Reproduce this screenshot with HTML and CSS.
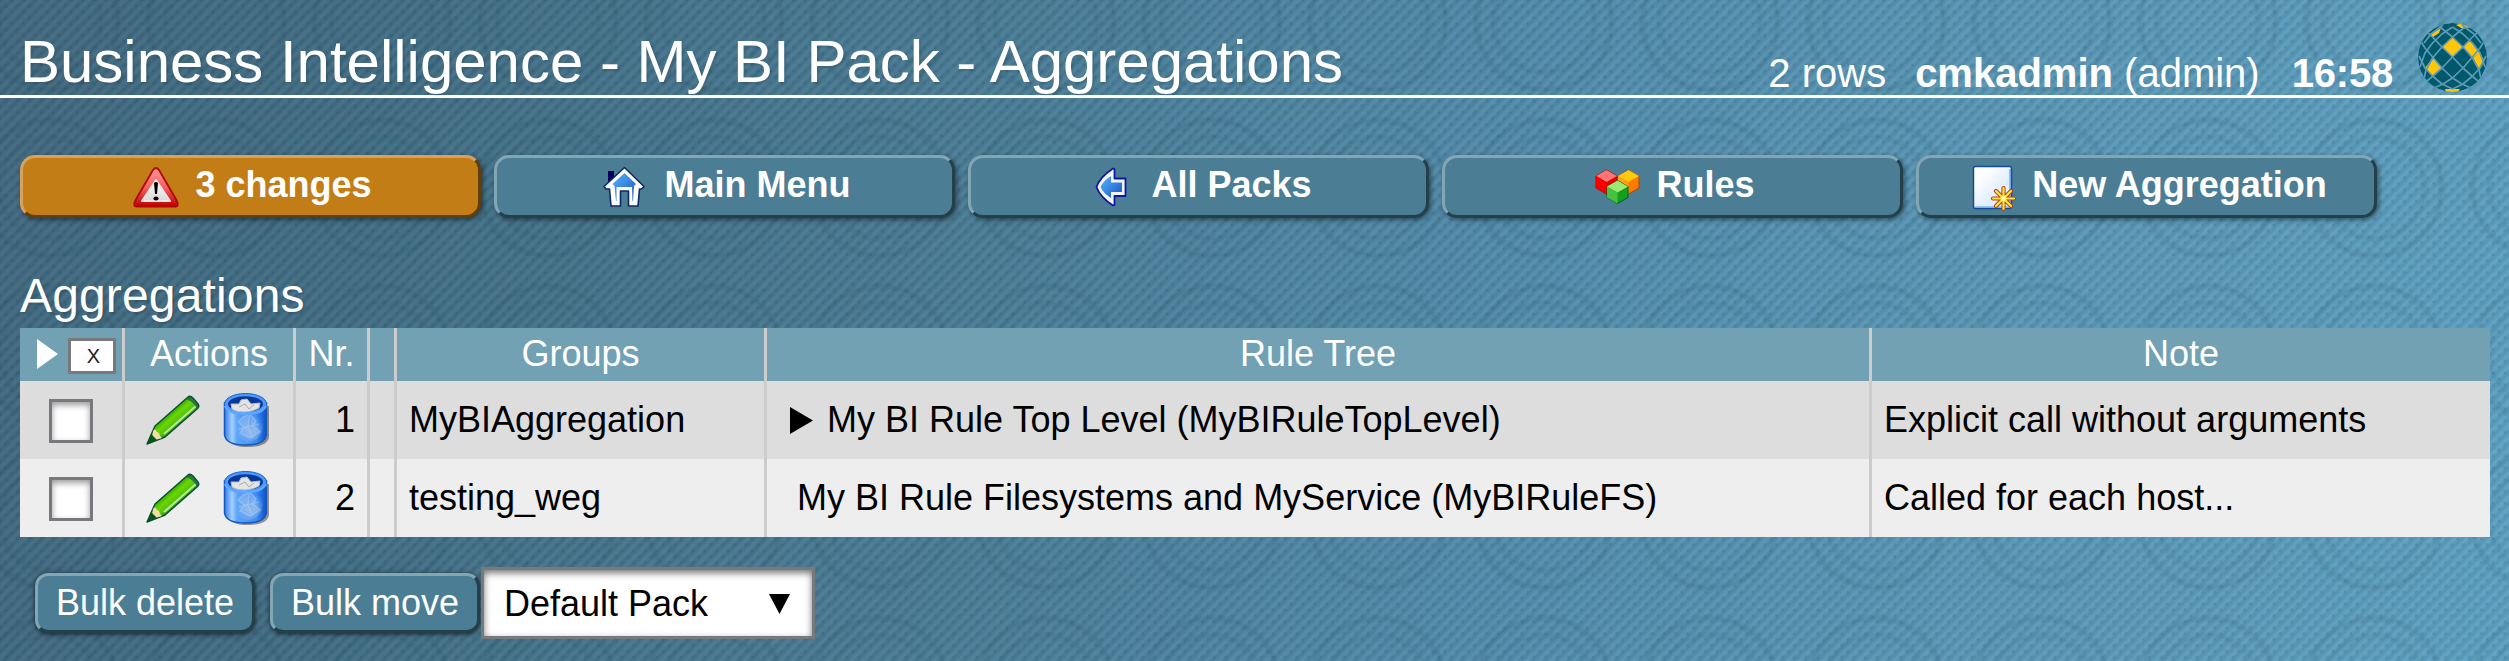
FILE: index.html
```html
<!DOCTYPE html>
<html lang="en">
<head>
<meta charset="utf-8">
<title>Business Intelligence - My BI Pack - Aggregations</title>
<link rel="stylesheet" href="styles.css">
</head>
<body>
<svg class="defs" width="0" height="0" aria-hidden="true">
  <defs>
    <linearGradient id="red" x1="0" y1="0" x2="0" y2="1"><stop offset="0" stop-color="#ff9a9a"/><stop offset=".5" stop-color="#f56060"/><stop offset="1" stop-color="#c00000"/></linearGradient>
    <linearGradient id="silver" x1="0" y1="0" x2="0" y2="1"><stop offset="0" stop-color="#fff"/><stop offset="1" stop-color="#d8d8d8"/></linearGradient>
    <linearGradient id="blue" x1="0" y1="0" x2="1" y2="1"><stop offset="0" stop-color="#59b4ff"/><stop offset="1" stop-color="#1556c0"/></linearGradient>
    <linearGradient id="page" x1="0" y1="0" x2="1" y2="1"><stop offset=".2" stop-color="#fff"/><stop offset=".65" stop-color="#e0edff"/><stop offset="1" stop-color="#fff"/></linearGradient>
    <linearGradient id="green" gradientUnits="userSpaceOnUse" x1="20" y1="16" x2="35" y2="33"><stop offset="0" stop-color="#0a8a0a"/><stop offset=".4" stop-color="#6bd600"/><stop offset=".65" stop-color="#52c40c"/><stop offset="1" stop-color="#0b7d10"/></linearGradient>
    <linearGradient id="can" x1="0" y1="0" x2="1" y2="0"><stop offset="0" stop-color="#2f7df0"/><stop offset=".18" stop-color="#a4d0ff"/><stop offset=".3" stop-color="#5ba4fa"/><stop offset=".75" stop-color="#3f8df2"/><stop offset="1" stop-color="#0a50c8"/></linearGradient>
    <radialGradient id="canglow" cx=".6" cy=".65" r=".5"><stop offset="0" stop-color="#8fb9ee"/><stop offset="1" stop-color="#8fb9ee" stop-opacity="0"/></radialGradient>
    <clipPath id="ball"><circle cx="34.5" cy="34.5" r="34.5"/></clipPath>
    <g id="arcs"><path d="M22 4 L34.500 14 L45 24 L54.500 35 L61 47 L63 56"/><path d="M8 8 L14.500 14 L24 24 L34.500 34 L45 45 L54 53 L60 58"/><path d="M2 17 L7 25 L15 34.500 L24 45 L34.500 55 L44 61 L53 65"/><path d="M1 33 L7 45 L14.500 53 L24 61 L34.500 66"/><path d="M34.500 4 L45 11 L54.500 20 L62 30 L67 44"/><path d="M44 2 L56 11 L63 20"/></g>
    <symbol id="pencil" viewBox="0 0 54 50">
      <path d="M1 49 L9 31 L42 2 Q44 0 47 3 L52 9 Q54 12 51 14 L19 42 Z" fill="url(#green)" stroke="#0a4a38" stroke-width="1.400" stroke-linejoin="round"/>
      <path d="M18 39 L50 11" stroke="#dcf7bd" stroke-width="2.200" opacity=".75"/>
      <path d="M7 36 L9 34 L11 37 L13 38 L14 41 L16 43 L6 46 Z" fill="#f4dcaa"/>
      <path d="M1 49 L5 39 L11 45 Z" fill="#06561c"/>
      <path d="M40 4 Q44 0 47 3 L52 9 Q54 12 51 14 Q48 7 40 4Z" fill="#0f5a48" opacity=".7"/>
    </symbol>
    <symbol id="trash" viewBox="0 0 48 56">
      <path d="M4 46 Q8 56 27 55 Q45 54 46 45 V14 H42Z" fill="#000" opacity=".38"/>
      <path d="M1.500 11 V43 Q3 53 22.500 53 Q42 53 43.500 43 V11Z" fill="url(#can)" stroke="#1258bd" stroke-width="1.500"/>
      <ellipse cx="25" cy="34" rx="15" ry="16" fill="url(#canglow)"/>
      <path d="M20 25 L27 22 L33 29 L30 34 L37 40 L27 46 L17 41 L21 35 L15 30 Z M27 22 L25 35 L30 46 M16 37 L36 32" fill="#9fc4ed" fill-opacity=".4" stroke="#c5ddf5" stroke-opacity=".35" stroke-width="1.500"/>
      <ellipse cx="22.500" cy="12" rx="21" ry="10.500" fill="#4c98fb" stroke="#1b60cc"/>
      <ellipse cx="22.500" cy="12" rx="17.500" ry="7.800" fill="#07389b"/>
      <path d="M8 12 L16 12 L18 8 L24 7 L28 12 L37 11 L36 16 Q29 20 22 20 Q13 20 9 17Z" fill="#e4e4e4" stroke="#bdbdbd"/>
      <path d="M16 15 L22 12 L26 17 L31 13" stroke="#aaa" fill="none"/>
      <path d="M2 14 Q6 22 22.500 22 Q39 22 43 14" fill="none" stroke="#5ea6ff" stroke-width="2.500"/>
    </symbol>
  </defs>
</svg>

<header class="header">
  <h1 class="title">Business Intelligence - My BI Pack - Aggregations</h1>
  <div class="status">
    <span class="rows">2 rows</span>
    <span class="user"><b>cmkadmin</b> (admin)</span>
    <b class="clock">16:58</b>
    <svg class="logo" viewBox="0 0 69 69">
      <g clip-path="url(#ball)">
        <circle cx="34.5" cy="34.5" r="34.5" fill="#00586a"/>
        <path fill="#ffc60a" d="M34.500 14 L45 24 L34.500 34 L24 24Z M54.500 20 L62 30 L54.500 35 L45 24 L50 18Z M62 30 L66 37 L61 46 L55 35Z M15 34.500 L24 45 L14.500 53 L7 45Z M13 11 L23 5 L21 10 L15 14 L10 12Z M38 2 L44 0 L52 4 L45 6Z M27 66 H42 L40 69 H28Z"/>
        <g fill="none" stroke="#5c9bb8" stroke-width="1.7" stroke-linejoin="round">
          <use href="#arcs"/>
          <use href="#arcs" transform="matrix(-1 0 0 1 69 0)"/>
        </g>
      </g>
    </svg>
  </div>
</header>

<nav class="buttons">
  <a class="ctx ctx-changes">
    <svg class="icon" viewBox="1 0 48 48">
      <path d="M25 5 Q26.500 5 28 7 L46 38 Q48 43.500 45 43.500 H5 Q2 43.500 4 38 L22 7 Q23.500 5 25 5Z" fill="url(#red)" stroke="#b00808" stroke-width="1.800"/>
      <path d="M25 17 L39 38 H11Z" fill="url(#silver)" stroke="#f4e4e4" stroke-width="2" stroke-linejoin="round"/>
      <path d="M23 20 Q25 18 27 20 L26 31 H24Z" fill="#000"/><ellipse cx="25" cy="35.500" rx="2.600" ry="1.900" fill="#000"/>
    </svg>
    <span class="label">3 changes</span>
  </a>
  <a class="ctx">
    <svg class="icon" viewBox="0 0 48 48">
      <path d="M6 8 H12 V17 L6 22Z" fill="#000060"/>
      <path d="M22.500 4.500 L42 23.500 L39.500 26 H37.500 L36 43 H26.500 V28 H18.500 V43 H9 L7.500 26 H4 L2 23.500Z" fill="#fff" stroke="#0b2a63" stroke-width="1.600" stroke-linejoin="round"/>
      <path d="M22.500 10 L34 21 L32 23 L31 38 H30.500 L30 24 H14.500 V38 H14 L12.500 23 L10.500 21Z" fill="url(#blue)"/>
    </svg>
    <span class="label">Main Menu</span>
  </a>
  <a class="ctx">
    <svg class="icon" viewBox="-3 0 48 48">
      <path d="M22 5.500 L23.500 6 V15.500 H34.500 V33 H23.500 V42 L22 42.500 Q9 34 5.500 24 Q9 14 22 5.500Z" fill="#f4f4ff" stroke="#0a1a9a" stroke-width="1.800" stroke-linejoin="round"/>
      <path d="M20 13 V19.500 H31 V29 H20 V35 Q12 30 9.500 24 Q12 18 20 13Z" fill="url(#blue)"/>
    </svg>
    <span class="label">All Packs</span>
  </a>
  <a class="ctx">
    <svg class="icon" viewBox="0 0 48 48">
      <g stroke-width="1" stroke-linejoin="round">
        <path d="M3 13 L13.500 7 L24 13 V25 L13.500 31 L3 25Z" fill="#e60000" stroke="#8c1010"/><path d="M3 13 L13.500 7 L24 13 L13.500 19Z" fill="#ff7474"/><path d="M3 13 L13.500 19 V31 L3 25Z" fill="#f80000"/>
        <path d="M25 13 L35.500 7 L46 13 V25 L35.500 31 L25 25Z" fill="#ff7a00" stroke="#a84800"/><path d="M25 13 L35.500 7 L46 13 L35.500 19Z" fill="#ffcb10"/><path d="M25 13 L35.500 19 V31 L25 25Z" fill="#ffa018"/>
        <path d="M14 23.500 L24.500 17.500 L35 23.500 V34.500 L24.500 40.500 L14 34.500Z" fill="#10a020" stroke="#0b5a14"/><path d="M14 23.500 L24.500 17.500 L35 23.500 L24.500 29.500Z" fill="#a0e870"/><path d="M14 23.500 L24.500 29.500 V40.500 L14 34.500Z" fill="#48c040"/>
      </g>
    </svg>
    <span class="label">Rules</span>
  </a>
  <a class="ctx">
    <svg class="icon" viewBox="-1 0 48 48">
      <rect x="3.500" y="3.500" width="38" height="42" rx="2" fill="url(#page)" stroke="#114d96" stroke-width="1.500"/>
      <path d="M5 44 H40 V6" fill="none" stroke="#4b9cf5" stroke-width="1.200"/>
      <path d="M33.500 25 V46 M23 35.500 H44 M26 28 L41 43 M41 28 L26 43" stroke="#b8401c" stroke-width="4.200" stroke-linecap="round"/>
      <path d="M33.500 25 V46 M23 35.500 H44 M26 28 L41 43 M41 28 L26 43" stroke="#ffe43c" stroke-width="2.200" stroke-linecap="round"/>
      <circle cx="33.500" cy="35.500" r="2.500" fill="#fff8a0"/>
    </svg>
    <span class="label">New Aggregation</span>
  </a>
</nav>

<main class="content">
  <h2 class="heading">Aggregations</h2>
  <table class="data">
    <colgroup><col class="c-sel"><col class="c-act"><col class="c-nr"><col class="c-gap"><col class="c-grp"><col class="c-tree"><col class="c-note"></colgroup>
    <thead>
      <tr>
        <th><div class="selall"><svg class="tri-white" viewBox="0 0 21 30"><path d="M0 0 L21 15 L0 30Z" fill="#fff"/></svg><button class="x">X</button></div></th>
        <th>Actions</th><th>Nr.</th><th></th><th>Groups</th><th>Rule Tree</th><th>Note</th>
      </tr>
    </thead>
    <tbody>
      <tr>
        <td><div class="check"></div></td>
        <td><div class="actions"><svg class="pencil"><use href="#pencil"/></svg><svg class="trash"><use href="#trash"/></svg></div></td>
        <td class="num">1</td><td></td><td>MyBIAggregation</td>
        <td><div class="tree"><svg class="tri" viewBox="0 0 23 27"><path d="M0 0 L23 13.500 L0 27Z"/></svg>My BI Rule Top Level (MyBIRuleTopLevel)</div></td>
        <td>Explicit call without arguments</td>
      </tr>
      <tr>
        <td><div class="check"></div></td>
        <td><div class="actions"><svg class="pencil"><use href="#pencil"/></svg><svg class="trash"><use href="#trash"/></svg></div></td>
        <td class="num">2</td><td></td><td>testing_weg</td>
        <td><div class="tree leaf">My BI Rule Filesystems and MyService (MyBIRuleFS)</div></td>
        <td>Called for each host...</td>
      </tr>
    </tbody>
  </table>
  <div class="bulk">
    <button class="btn btn-delete">Bulk delete</button>
    <button class="btn btn-move">Bulk move</button>
    <div class="select"><span>Default Pack</span><svg class="arrow" viewBox="0 0 21 20"><path d="M0 0 H21 L10.500 20Z"/></svg></div>
  </div>
</main>
</body>
</html>
```
FILE: styles.css
```css
* { box-sizing: border-box; }

html { height: 661px; overflow: hidden; }

body {
  margin: 0;
  height: 661px;
  overflow: hidden;
  font-family: "Liberation Sans", Arial, sans-serif;
  font-size: 36px;
  color: #000;
  background-color: #4e829b;
  background-image:
    radial-gradient(circle at 50% 50%, transparent 46px, rgba(20, 60, 75, .09) 51px, transparent 55px, transparent 63px, rgba(20, 60, 75, .12) 68px, transparent 72px),
    radial-gradient(circle, rgba(20, 60, 90, .2) 0, transparent 2.5px),
    radial-gradient(circle, rgba(20, 60, 90, .2) 0, transparent 2.5px),
    repeating-linear-gradient(135deg, rgba(20, 60, 85, .13) 0, rgba(255, 255, 255, .04) 4.192px, rgba(20, 60, 85, .13) 8.384px),
    linear-gradient(97deg, #42697f 0%, #436e84 15%, #4c7e97 40%, #558fae 62%, #5c9ab8 80%, #60a3c4 100%);
  background-size: 166px 166px, 11.857px 11.857px, 11.857px 11.857px, 166px 166px, 100% 100%;
  background-position: -33px -61px, 0 0, 5.929px 5.929px, 0 0, 0 0;
}

.defs { position: absolute; }

.header {
  display: flex;
  justify-content: space-between;
  height: 98px;
  padding-left: 20px;
  border-bottom: 3px solid #fff;
  color: #fff;
  white-space: nowrap;
}
.title {
  margin: 0;
  padding-top: 27px;
  font-size: 60px;
  font-weight: normal;
  line-height: 69px;
  letter-spacing: -.02px;
  text-shadow: 2px 2px 2px rgba(0, 0, 0, .12);
}
.status {
  display: flex;
  align-items: flex-start;
  padding-right: 22px;
  font-size: 40px;
  line-height: 45px;
}
.rows, .user, .clock { padding-top: 51px; }
.rows { margin-right: 29px; }
.user { margin-right: 32px; }
.clock { letter-spacing: -.2px; }
.logo { width: 69px; height: 69px; margin: 23px 0 0 25px; }

.buttons {
  display: flex;
  gap: 13px;
  margin: 57px 0 0 20px;
}
.ctx {
  display: flex;
  align-items: center;
  justify-content: center;
  gap: 15px;
  width: 461px;
  height: 63px;
  padding-left: 3px;
  border: 3px solid;
  border-color: #83a6b4 #233f4a #233f4a #83a6b4;
  border-radius: 15px;
  background: #4b7e95;
  box-shadow: 2px 2px 5px rgba(0, 0, 0, .45);
  color: #fff;
  font-weight: bold;
  line-height: 42px;
}
.label { padding-bottom: 3px; }
.ctx-changes {
  border-color: #d6a260 #613e0b #613e0b #d6a260;
  background: #c37d17;
}
.icon { width: 48px; height: 48px; }

.content { padding: 47px 0 0 20px; }
.heading {
  margin: 0;
  height: 63px;
  font-size: 48px;
  font-weight: normal;
  line-height: 61px;
  letter-spacing: .15px;
  color: #fff;
  text-shadow: 2px 2px 2px rgba(0, 0, 0, .15);
}

.data {
  width: 2470px;
  table-layout: fixed;
  border-collapse: separate;
  border-spacing: 0;
  line-height: 42px;
  white-space: nowrap;
}
.c-sel { width: 102px; }
.c-act { width: 171px; }
.c-nr { width: 74px; }
.c-gap { width: 27px; }
.c-grp { width: 370px; }
.c-tree { width: 1105px; }
.c-note { width: 621px; }
.data th {
  height: 53px;
  padding: 0 0 1px;
  background: #72a1b3;
  color: #fff;
  font-weight: normal;
}
.data td { height: 78px; padding: 0 12px; background: #eee; }
.data tbody tr:first-child td { background: #ddd; }
.data th + th, .data td + td { border-left: 3px solid #ccc; }
.data td.num { text-align: right; }
.data td:nth-child(-n+2), .data td:nth-child(4) { padding: 0; }

.selall { display: flex; align-items: center; gap: 10px; padding-left: 17px; }
.tri-white { width: 21px; height: 30px; }
.x {
  width: 48px;
  height: 36px;
  margin-top: 4px;
  padding: 0 0 0 3px;
  border: 3px solid #77797d;
  background: #fff;
  color: #222;
  font: 20px/28px "Liberation Sans", Arial, sans-serif;
}
.check {
  width: 44px;
  height: 44px;
  margin: 2px 0 0 29px;
  border: 3px solid #77797d;
  background: #fff;
  box-shadow: inset 0 3px 6px rgba(0, 0, 0, .4);
}
.actions { display: flex; align-items: center; padding-left: 21px; }
.pencil { width: 54px; height: 50px; }
.trash { width: 48px; height: 56px; margin-left: 23px; }
.tree { display: flex; align-items: center; padding-left: 11px; }
.tree.leaf { padding-left: 18px; }
.tri { width: 23px; height: 27px; margin-right: 14px; }

.bulk { display: flex; align-items: center; padding: 30px 0 0 15px; }
.btn {
  height: 60px;
  padding: 0 0 1px;
  border: 3px solid;
  border-color: #83a6b4 #233f4a #233f4a #83a6b4;
  border-radius: 13px;
  background: #4b7e95;
  box-shadow: 0 1px 5px rgba(0, 0, 0, .7);
  color: #fff;
  font: 36px/42px "Liberation Sans", Arial, sans-serif;
}
.btn-delete { width: 220px; margin-right: 15px; }
.btn-move { width: 210px; margin-right: 1px; }
.select {
  display: flex;
  align-items: center;
  justify-content: space-between;
  width: 334px;
  height: 72px;
  padding: 2px 22px 0 20px;
  border: 3px solid #77797d;
  background: #fff;
  box-shadow: inset 0 3px 7px rgba(0, 0, 0, .55);
}
.arrow { width: 21px; height: 20px; }
```
